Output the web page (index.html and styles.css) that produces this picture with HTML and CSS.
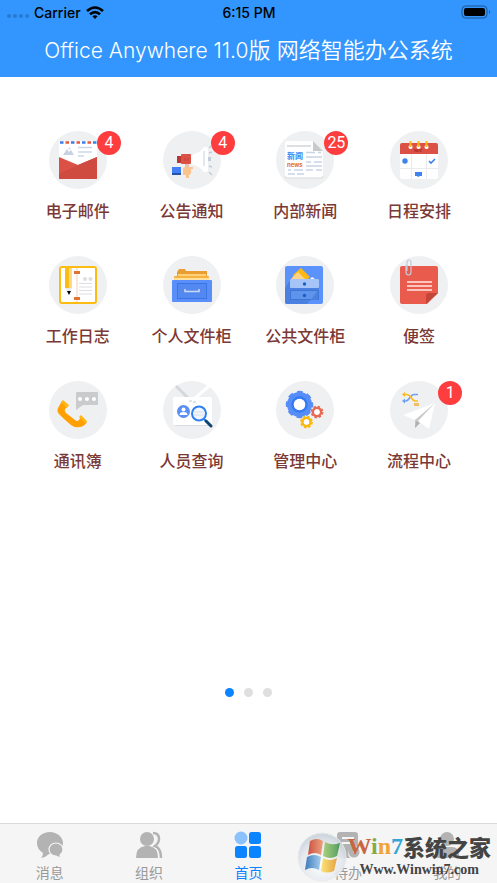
FILE: index.html
```html
<!DOCTYPE html>
<html lang="zh-CN">
<head>
    <meta charset="UTF-8">
    <meta name="viewport" content="width=device-width, initial-scale=1">
    <title>Office Anywhere 11.0版 网络智能办公系统</title>
    <link rel="stylesheet" href="styles.css">
</head>
<body>
    <header class="header">
        <div class="status">
            <div class="carrier">
                <span class="signal"><i></i><i></i><i></i><i></i></span>
                <span>Carrier</span>
                <svg width="18" height="13" viewBox="0 0 18 13" fill="none" stroke="#000" stroke-width="2.6">
                    <path d="M1 5Q9 -2 17 5M4 8.300Q9 3.800 14 8.300"/>
                    <path d="M9 13L6.400 10.300Q9 8.400 11.600 10.300Z" fill="#000" stroke="none"/>
                </svg>
            </div>
            <div class="time">6:15 PM</div>
            <div class="power">
                <svg width="30" height="14" viewBox="0 0 30 14">
                    <rect x="1" y="1" width="25" height="12" rx="3.500" fill="none" stroke="#1c5590"/>
                    <rect x="3" y="3" width="21" height="8" rx="2"/>
                    <path d="M28 5q2 2 0 4z" fill="#1c5590"/>
                </svg>
            </div>
        </div>
        <h1><span class="latin">Office Anywhere 11.0</span>版 网络智能办公系统</h1>
    </header>

    <main class="main">
        <div class="apps">
            <a class="app" href="#mail">
                <span class="icon">
                    <svg viewBox="0 0 58 58">
                        <path d="M10 10h38v31H10z" fill="#fff"/>
                        <path d="M11 11.500h37" stroke="#e9573f" stroke-width="2.500" stroke-dasharray="3.500 7.500" stroke-dashoffset="-5.500"/>
                        <path d="M11 11.500h37" stroke="#3b7ded" stroke-width="2.500" stroke-dasharray="3.500 7.500"/>
                        <path d="M14 24l4-6 2 3 2-2 3 5z" fill="#c8d3e2"/>
                        <circle cx="20.500" cy="17.500" r="1" fill="#c8d3e2"/>
                        <path d="M29 16.500h14M29 21h14M29 25h6" stroke="#cbd7e6" stroke-width="1.500"/>
                        <path d="M10 26l19 8 19-8v21q0 1-1 1H11q-1 0-1-1z" fill="#dc5145"/>
                        <path d="M10 43l19-9 19-8v21q0 1-1 1H11q-1 0-1-1z" fill="#cf4a3f"/>
                    </svg>
                    <span class="badge">4</span>
                </span>
                <span class="name">电子邮件</span>
            </a>
            <a class="app" href="#notice">
                <span class="icon">
                    <svg viewBox="0 0 58 58">
                        <path d="M22 33h4v4h-4z" fill="#e5c0b0"/>
                        <path d="M28 24q9-2 13-8v25q-4-6-13-8z" fill="#fff"/>
                        <rect x="40" y="16" width="5" height="25" rx="2" fill="#fff"/>
                        <path d="M41 20v15" stroke="#c6d1df"/>
                        <path d="M14 25h5v7h-5z" fill="#b93732"/>
                        <rect x="18" y="23" width="10" height="10" rx="1" fill="#dc5145"/>
                        <path d="M22 27v3M25 27v3" stroke="#c43f38"/>
                        <path d="M45 26h3v4h-3z" fill="#c1cddb"/>
                        <path d="M46 17l2-2M46 22l3-1M46 35l3 1M46 41l3 3" stroke="#bccadd" stroke-width="1.400"/>
                        <rect x="9" y="36" width="9" height="8" fill="#447ef5"/>
                        <path d="M9 42h9v2H9z" fill="#2453b0"/>
                        <path d="M20 37q1-1 3-1h7v2h-2v4q-1 2-2 2v3h-3v-3h-3z" fill="#fbc48f"/>
                    </svg>
                    <span class="badge">4</span>
                </span>
                <span class="name">公告通知</span>
            </a>
            <a class="app" href="#news">
                <span class="icon">
                    <svg viewBox="0 0 58 58">
                        <path d="M11 10h26l10 10v25q0 2-2 2H11q-2 0-2-2V12q0-2 2-2z" fill="#fff"/>
                        <path d="M9 45q0 2 2 2h34q2 0 2-2" fill="none" stroke="#d6d8da"/>
                        <path d="M37 10l10 10H37z" fill="#c8c9cb"/>
                        <path d="M11 15h24" stroke="#d0d1d3" stroke-width="1.400"/>
                        <path d="M30 21.500h9M42 21.500h3M30 26h16M30 31h5M38 31h8M30 35h16M12 39h3M18 39h9M30 39h7M40 39h6M12 43h7M21 43h7" stroke="#c8d4e3" stroke-width="1.300"/>
                        <text class="news-cn" x="11" y="28">新闻</text>
                        <text class="news-en" x="11" y="36">news</text>
                    </svg>
                    <span class="badge">25</span>
                </span>
                <span class="name">内部新闻</span>
            </a>
            <a class="app" href="#calendar">
                <span class="icon">
                    <svg viewBox="0 0 58 58">
                        <path d="M10 22h38v24q0 2-2 2H12q-2 0-2-2z" fill="#fff"/>
                        <path d="M12 12h34q2 0 2 2v9H10v-9q0-2 2-2z" fill="#dc5145"/>
                        <path d="M21.500 23v25M36.500 23v25M10 37.500h38" stroke="#e9ebed"/>
                        <path d="M20.500 16h.1M28.500 16h.1M36.500 16h.1" stroke="#fff" stroke-width="4" stroke-linecap="round"/>
                        <path d="M20.500 10v6M28.500 10v6M36.500 10v6" stroke="#fbb51c" stroke-width="2"/>
                        <text class="month" x="24" y="21">Nov</text>
                        <circle cx="15" cy="30" r="2.700" fill="#3f82f0"/>
                        <path d="M39 30l2 2 4-4" fill="none" stroke="#3f82f0" stroke-width="1.700"/>
                        <path d="M25 41h7v4h-2l-2 1-1-1h-2z" fill="#3f82f0"/>
                    </svg>
                </span>
                <span class="name">日程安排</span>
            </a>
            <a class="app" href="#diary">
                <span class="icon">
                    <svg viewBox="0 0 58 58">
                        <rect x="11" y="11" width="36" height="36" rx="2" fill="#fff" stroke="#fdbc13" stroke-width="2"/>
                        <path d="M28 12v34" stroke="#f6cfae"/>
                        <path d="M16 12h4v20h-4z" fill="#fdbc13"/>
                        <path d="M20 12h3v20h-3z" fill="#ffd983"/>
                        <path d="M16 32h7l-3.500 7z" fill="#e8ecef"/>
                        <path d="M18 35h4l-2 4z"/>
                        <path d="M25 16.500h6M25 42.500h6" stroke="#df7535" stroke-width="3"/>
                        <circle cx="36" cy="23" r="2" fill="#dcdee1"/>
                        <circle cx="41.500" cy="23" r="2" fill="#dcdee1"/>
                        <path d="M30 27.500h13M30 31h13M30 34.500h13M30 38h13" stroke="#dcdee2"/>
                    </svg>
                </span>
                <span class="name">工作日志</span>
            </a>
            <a class="app" href="#my-files">
                <span class="icon">
                    <svg viewBox="0 0 58 58">
                        <path d="M14 16l2-3h6l1 2h21v6H14z" fill="#e89e31"/>
                        <path d="M15 18h28v3H15z" fill="#ffd077"/>
                        <path d="M11 20h34q1 0 1 1v5H12z" fill="#f6b13f"/>
                        <path d="M12 22h34v3H12z" fill="#ffe09d"/>
                        <rect x="9" y="24" width="40" height="22" rx="1" fill="#5a8ff9"/>
                        <rect x="14.500" y="27.500" width="29" height="15" fill="#5288ef" stroke="#3876e6"/>
                        <path d="M22 33v2.500h14V33" fill="none" stroke="#ccd9ee" stroke-width="1.600"/>
                    </svg>
                </span>
                <span class="name">个人文件柜</span>
            </a>
            <a class="app" href="#public-files">
                <span class="icon">
                    <svg viewBox="0 0 58 58">
                        <rect x="9" y="10" width="38" height="38" rx="2" fill="#5c92fb"/>
                        <path d="M9 32l6-9h28v10L31 48H11q-2 0-2-2z" fill="#4a80df"/>
                        <path d="M18 18l7-6 9 9-4 4H15z" fill="#fdb913"/>
                        <path d="M15 23l7-7 7 7z" fill="#ffd489"/>
                        <path d="M34 23l2-2 3 2z" fill="#fff"/>
                        <rect x="14" y="23" width="29" height="9" rx="1" fill="#a5c4f8"/>
                        <rect x="14.500" y="34.500" width="28" height="9" fill="#5f94ed" stroke="#3e76d5"/>
                        <path d="M42 34v10h-7z" fill="#4b80df"/>
                        <circle cx="28.500" cy="28" r="1.700" fill="#195fc5"/>
                        <circle cx="28.500" cy="39.500" r="1.700" fill="#195fc5"/>
                    </svg>
                </span>
                <span class="name">公共文件柜</span>
            </a>
            <a class="app" href="#notes">
                <span class="icon">
                    <svg viewBox="0 0 58 58">
                        <path d="M12 10h34q2 0 2 2v25L37 48H12q-2 0-2-2V12q0-2 2-2z" fill="#e95b4d"/>
                        <path d="M48 37h-9q-3 0-3 3v8z" fill="#c54539"/>
                        <path d="M17 26h25M17 30h25M17 34h25" stroke="#ffe6e2" stroke-width="1.600"/>
                        <path d="M16 9v7q0 3 2.500 3t2.500-3V7q0-3-2-3t-2 3v8" fill="none" stroke="#c4cbd8" stroke-width="1.200"/>
                    </svg>
                </span>
                <span class="name">便签</span>
            </a>
            <a class="app" href="#contacts">
                <span class="icon">
                    <svg viewBox="0 0 58 58">
                        <path d="M28 11h20q1 0 1 1v12H34l-7 5V12q0-1 1-1z" fill="#c9cbcd"/>
                        <g fill="#fff">
                            <circle cx="31" cy="18" r="2"/>
                            <circle cx="38" cy="18" r="2"/>
                            <circle cx="45" cy="18" r="2"/>
                        </g>
                        <path d="M13 20l6 5-3 3q-1 2 1 4l9 7q2 2 4 0l2-3 6 5q-3 5-8 5-4 1-8-2-5-4-10-9-5-4-3-8z" fill="#ffa000"/>
                        <path d="M12 21l2-2 6 5-2 3zM30 36l2-2 6 6-2 2z" fill="#ffb818"/>
                    </svg>
                </span>
                <span class="name">通讯簿</span>
            </a>
            <a class="app" href="#people">
                <span class="icon">
                    <svg viewBox="0 0 58 58">
                        <path d="M13 5l12 12" stroke="#d5d7da" stroke-width="3"/>
                        <path d="M46 5L31 18" stroke="#fff" stroke-width="3"/>
                        <rect x="10" y="16" width="39" height="28" rx="2" fill="#fff"/>
                        <path d="M12 44.500h35" stroke="#d7dadf"/>
                        <path d="M26 20h3M30 21h3" stroke="#d7dadf" stroke-width="1.500"/>
                        <circle cx="20.500" cy="30.500" r="6.500" fill="#5c8ff4"/>
                        <circle cx="20.500" cy="28.500" r="2" fill="#fff"/>
                        <path d="M16.500 34q0-3 4-3t4 3z" fill="#fff"/>
                        <circle cx="36" cy="32.500" r="7" fill="#f3f6fb" stroke="#2d80f2" stroke-width="2"/>
                        <path d="M31 31h10M31 34h10" stroke="#d5dfeb"/>
                        <path d="M41 38l2 2" stroke="#2d80f2" stroke-width="2"/>
                        <path d="M43 40l5 5" stroke="#10426f" stroke-width="3" stroke-linecap="round"/>
                    </svg>
                </span>
                <span class="name">人员查询</span>
            </a>
            <a class="app" href="#manage">
                <span class="icon">
                    <svg viewBox="0 0 58 58" fill="none">
                        <g stroke="#568df8">
                            <circle cx="23.500" cy="23.500" r="9" stroke-width="7"/>
                            <circle cx="23.500" cy="23.500" r="12.500" stroke-width="2.400" stroke-dasharray="5.500 4.317" stroke-dashoffset="2.700"/>
                        </g>
                        <circle cx="23.500" cy="23.500" r="7" stroke="#347af0" stroke-width="2.500"/>
                        <circle cx="23.500" cy="23.500" r="5.800" fill="#fff"/>
                        <g stroke="#e66b55">
                            <circle cx="41" cy="31" r="4" stroke-width="2.600"/>
                            <circle cx="41" cy="31" r="5.500" stroke-width="1.800" stroke-dasharray="2.400 1.920"/>
                        </g>
                        <circle cx="41" cy="31" r="2.700" fill="#fff"/>
                        <g stroke="#fbb90f">
                            <circle cx="30.500" cy="41" r="4" stroke-width="2.600"/>
                            <circle cx="30.500" cy="41" r="5.500" stroke-width="1.800" stroke-dasharray="2.400 1.920"/>
                        </g>
                        <circle cx="30.500" cy="41" r="2.700" fill="#fff"/>
                    </svg>
                </span>
                <span class="name">管理中心</span>
            </a>
            <a class="app" href="#workflow">
                <span class="icon">
                    <svg viewBox="0 0 58 58">
                        <g fill="none" stroke-width="1.700">
                            <path d="M28 13.500h-4q-2 0-4 3t-4 3.500h-3" stroke="#729ef5"/>
                            <path d="M13 13.500h4q2 0 4 3t4 3.500h3" stroke="#fbbc20"/>
                        </g>
                        <path d="M15 11v5l-3-2.500z" fill="#fbbc20"/>
                        <path d="M15 17.500v5L12 20z" fill="#729ef5"/>
                        <path d="M24 22h5v3h-5z" fill="#f0bd69"/>
                        <path d="M45 22L13 34l12 5z" fill="#fff"/>
                        <path d="M45 22L25 39v8l4-5z" fill="#c9cacc"/>
                        <path d="M25 47l1-7 4 2z" fill="#aeb0b4"/>
                        <path d="M45 22L28 40l11 8z" fill="#fff"/>
                    </svg>
                    <span class="badge">1</span>
                </span>
                <span class="name">流程中心</span>
            </a>
        </div>

        <div class="pager">
            <button class="dot active" type="button" aria-label="第1页"></button>
            <button class="dot" type="button" aria-label="第2页"></button>
            <button class="dot" type="button" aria-label="第3页"></button>
        </div>
    </main>

    <footer class="footer">
        <nav class="tabs">
            <a class="tab" href="#messages">
                <svg viewBox="0 0 28 28" fill="#b3b3b3">
                    <path d="M14 1C6 1 1 6 1 12q0 6 6 10 0 3-2 5 5-1 8-4C21 23 27 18 27 12S21 1 14 1z"/>
                    <path d="M20 12c-4 0-7 3-7 6.500s3 6.500 7 6.500q2 1 5 2-1-2-1-3 3-2 3-5.500C27 15 24 12 20 12z" stroke="#f5f5f5" stroke-width="1.200"/>
                </svg>
                <span>消息</span>
            </a>
            <a class="tab" href="#organization">
                <svg viewBox="0 0 28 28" fill="#b3b3b3">
                    <circle cx="12" cy="8" r="7"/>
                    <path d="M1 27q0-11 9-12h4q9 1 9 12z"/>
                    <path d="M18 2q6 0 6 6 0 4-4 7 6 2 6 12" fill="none" stroke="#b3b3b3" stroke-width="2.500"/>
                </svg>
                <span>组织</span>
            </a>
            <a class="tab current" href="#home">
                <svg viewBox="0 0 28 28" fill="#0b84ff">
                    <circle cx="7" cy="7" r="6.500" fill="#8bc2fb"/>
                    <rect x="15" y="1" width="12" height="12" rx="2.500"/>
                    <rect x="1" y="15" width="12" height="12" rx="2.500"/>
                    <rect x="15" y="15" width="12" height="12" rx="2.500"/>
                </svg>
                <span>首页</span>
            </a>
            <a class="tab" href="#todo">
                <svg viewBox="0 0 28 28" fill="#b3b3b3">
                    <path d="M6 1h15q3 0 3 3v12a7 7 0 0 0-8 11H6q-3 0-3-3V4q0-3 3-3z"/>
                    <path d="M8 7h12M8 12h8" stroke="#f5f5f5" stroke-width="2"/>
                    <circle cx="20" cy="21" r="5.500"/>
                    <path d="M20 18v3h3" fill="none" stroke="#f5f5f5" stroke-width="1.500"/>
                </svg>
                <span>待办</span>
            </a>
            <a class="tab" href="#me">
                <svg viewBox="0 0 28 28" fill="#b3b3b3">
                    <circle cx="14" cy="8" r="7"/>
                    <path d="M2 24q0-8 7-8h10q7 0 7 8 0 3-3 3H5q-3 0-3-3z"/>
                </svg>
                <span>我的</span>
            </a>
        </nav>

        <!-- site logo laid over the tab bar -->
        <div class="watermark">
            <svg class="orb" viewBox="0 0 50 50">
                <defs>
                    <radialGradient id="orb" cx=".5" cy=".65" r=".6">
                        <stop offset="0" stop-color="#fff"/>
                        <stop offset=".7" stop-color="#e4e9ee"/>
                        <stop offset="1" stop-color="#ccd4dc"/>
                    </radialGradient>
                    <linearGradient id="red"><stop stop-color="#c7402f"/><stop offset="1" stop-color="#ed9972"/></linearGradient>
                    <linearGradient id="green"><stop stop-color="#a3cc70"/><stop offset="1" stop-color="#439654"/></linearGradient>
                    <linearGradient id="blue"><stop stop-color="#2b6db5"/><stop offset="1" stop-color="#9acbed"/></linearGradient>
                    <linearGradient id="yellow"><stop stop-color="#fbe36c"/><stop offset="1" stop-color="#e69b30"/></linearGradient>
                </defs>
                <circle cx="25" cy="25" r="24" fill="url(#orb)" stroke="#e8ebee"/>
                <path d="M13 9q7-4 13 0l-2 14q-6-4-13 0z" fill="url(#red)"/>
                <path d="M28 10q7 4 15 1l-3 13q-7 4-14 0z" fill="url(#green)"/>
                <path d="M10 25q7-4 14 0l-2 13q-7-4-14 0z" fill="url(#blue)"/>
                <path d="M26 26q7 4 14 0l-3 13q-7 3-13 0z" fill="url(#yellow)"/>
            </svg>
            <div class="brand">
                <div class="brand-name"><span class="win"><b class="w">W</b><b class="i">i</b><b class="n">n</b><b class="seven">7</b></span><span>系统之家</span></div>
                <div class="brand-url">Www.Winwin7.com</div>
            </div>
        </div>
    </footer>
</body>
</html>
```
FILE: styles.css
```css
* {
    box-sizing: border-box;
}
body {
    margin: 0;
    min-height: 100vh;
    display: flex;
    flex-direction: column;
    background: #fff;
    font-family: Inter, "Noto Sans CJK SC", sans-serif;
}
a {
    color: inherit;
    text-decoration: none;
}
svg {
    display: block;
}

/* header */
.header {
    background: #3296fe;
    padding-bottom: 10px;
}
.status {
    display: grid;
    grid-template-columns: 1fr auto 1fr;
    align-items: center;
    height: 24px;
    padding: 0 6px 0 7px;
    font-size: 14px;
    font-weight: 500;
}
.carrier {
    display: flex;
    align-items: center;
    gap: 5px;
}
.signal {
    display: flex;
    gap: 2px;
    padding-top: 8px;
}
.signal i {
    width: 4px;
    height: 4px;
    border-radius: 50%;
    background: #277acf;
}
.power {
    justify-self: end;
}
h1 {
    margin: 10px 0 0;
    color: #fff;
    font-size: 22px;
    font-weight: 350;
    line-height: 32px;
    text-align: center;
    white-space: nowrap;
}
.latin {
    font-size: 21px;
}

/* app grid */
.main {
    flex: 1;
    display: flex;
    flex-direction: column;
    padding: 54px 21px 126px;
}
.apps {
    display: grid;
    grid-template-columns: repeat(4, 1fr);
    row-gap: 33px;
}
.app {
    display: flex;
    flex-direction: column;
    align-items: center;
    gap: 10px;
}
.icon {
    position: relative;
    width: 58px;
    height: 58px;
    border-radius: 50%;
    background: #eef0f2;
}
.news-cn {
    fill: #3b85f3;
    font-size: 8px;
    font-weight: 700;
}
.news-en {
    fill: #e06f31;
    font-size: 6px;
    font-weight: 700;
}
.month {
    fill: #a52b25;
    font-size: 4px;
    font-weight: 700;
}
.badge {
    position: absolute;
    top: 0;
    left: 48px;
    width: 24px;
    height: 24px;
    border-radius: 50%;
    background: #fe3d3e;
    color: #fff;
    font-family: Roboto, sans-serif;
    font-size: 16px;
    line-height: 24px;
    text-align: center;
}
.name {
    color: #7b3936;
    font-size: 16px;
    font-weight: 500;
    line-height: 24px;
}
.pager {
    display: flex;
    justify-content: center;
    gap: 10px;
    margin-top: auto;
}
.dot {
    width: 9px;
    height: 9px;
    padding: 0;
    border: none;
    border-radius: 50%;
    background: #dfdfdf;
    cursor: pointer;
}
.dot.active {
    background: #0b84ff;
}

/* tab bar */
.footer {
    position: relative;
    background: #f5f5f5;
    border-top: 1px solid #d9d9d9;
}
.tabs {
    display: grid;
    grid-template-columns: repeat(5, 1fr);
}
.tab {
    display: flex;
    flex-direction: column;
    align-items: center;
    gap: 4px;
    padding-top: 7px;
    color: #999;
    font-size: 14px;
    line-height: 20px;
}
.tab svg {
    width: 28px;
    height: 28px;
}
.tab.current {
    color: #0b84ff;
}

/* watermark */
.watermark {
    position: absolute;
    right: 6px;
    bottom: 1px;
    display: flex;
    pointer-events: none;
}
.orb {
    width: 50px;
    height: 50px;
    opacity: 0.9;
}
.brand {
    color: #444;
}
.brand-name {
    display: flex;
    align-items: center;
    height: 28px;
    font-size: 22px;
    font-weight: 900;
}
.win {
    font-family: "Liberation Serif", serif;
    font-size: 24px;
}
.w {
    color: #c9663f;
}
.i {
    color: #86aa49;
}
.n {
    color: #f0a33a;
}
.seven {
    color: #35a5d8;
}
.brand-url {
    padding: 2px 0 0 12px;
    font-family: "Liberation Serif", serif;
    font-size: 14px;
    font-weight: 700;
    line-height: 16px;
}
```
